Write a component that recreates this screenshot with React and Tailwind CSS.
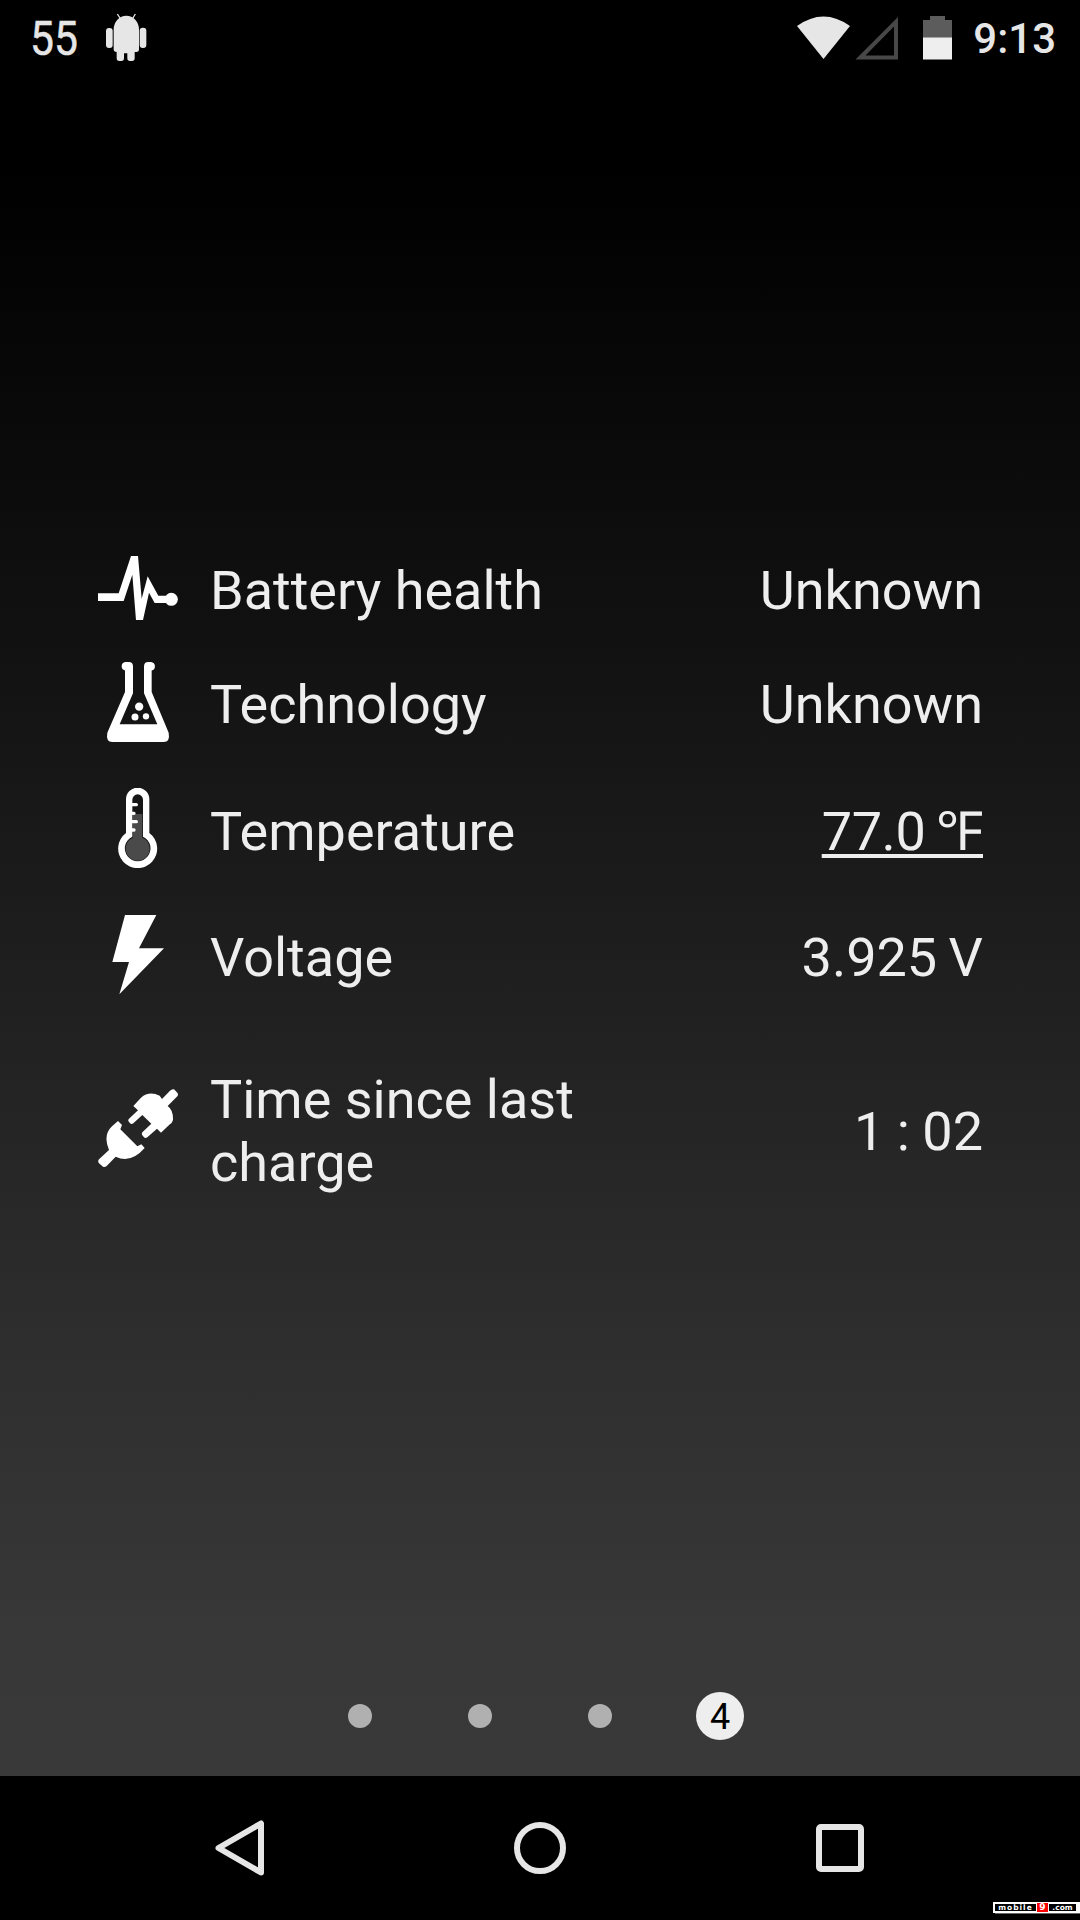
import React from "react";

const PulseIcon = () => (
  <svg viewBox="54 24 240 240" className="w-20 h-20" fill="#fff">
    <path d="M54 160H116L153 48H174L185 176L203 109L235 167H258V189H224L207 158L189 240H168L157 104L131 183H54Z" />
    <circle cx="274" cy="178" r="19.5" />
  </svg>
);

const FlaskIcon = () => (
  <svg viewBox="54 366 240 240" className="w-20 h-20" fill="#fff">
    <path d="M136 366h10q13 0 13 13V460L119 553H232L192 460V379q0-13 13-13h8a13 13 0 0 1 2 25.500V456L266 578q5 28-15 28H97q-20 0-15-28L135 456V391.500a13 13 0 0 1 1-25.500Z" />
    <circle cx="177.500" cy="500" r="12.500" />
    <circle cx="165" cy="531" r="10.500" />
    <circle cx="198" cy="529" r="9.500" />
  </svg>
);

const ThermometerIcon = () => (
  <svg viewBox="54 53 240 240" className="w-20 h-20" fill="#fff">
    <path d="M138 87a35 35 0 0 1 70 0V188a58.500 58.500 0 1 1-70 0Z" />
    <path
      d="M157 88a16 16 0 0 1 32 0V199a38.500 38.500 0 1 1-32 0Z"
      fill="#161616"
    />
    <path d="M159 131H187V202a36 36 0 1 1-28 0Z" fill="#4a4a4a" />
    <path
      d="M155 103H169M155 129H162M155 154H169M155 179H162"
      stroke="#fff"
      strokeWidth="10"
      strokeLinecap="round"
    />
  </svg>
);

const BoltIcon = () => (
  <svg viewBox="54 435 240 240" className="w-20 h-20" fill="#fff">
    <path d="M135 435H229L177 535H252L118 673L147 576H97Z" />
  </svg>
);

const PlugIcon = () => (
  <svg viewBox="54 84 240 240" className="w-20 h-20" fill="#fff">
    <path d="M160 138L183 113Q207 92 239 107L246 117L270 92q6-6 12-4l10 10q4 6 0 11L263 138Q280 150 279 180Q277 189 268 194L243 218L231 206L202 232q-6 4-10 0l-5-6q-3-5 0-9L214 191L187 165L160 190q-5 4-10 0l-5-7q-1-4 2-7L174 151Z" />
    <path d="M114 183L126 195L121 208L172 259L184 253L194 264Q152 312 107 290L80 318q-6 5-11 2l-12-10q-5-6 0-12L87 270Q68 225 96 199Z" />
  </svg>
);

const AndroidIcon = () => (
  <svg viewBox="315 40 126 144" className="w-[42px] h-12" fill="#e6e6e6">
    <path d="M341 90a38 42 0 0 1 76 0V149q0 8-8 8H404V176q0 8-8 8h-6q-8 0-8-8V161H372V176q0 8-8 8h-6q-8 0-8-8V157q-9 0-9-8Z" />
    <rect x="318" y="85" width="20" height="60" rx="9" />
    <rect x="419" y="84" width="20" height="61" rx="9" />
    <path d="M352 43L362 58M406 43L397 58" stroke="#e6e6e6" strokeWidth="4" />
  </svg>
);

const ROWS = [
  {
    label: "Battery health",
    value: "Unknown",
    icon: PulseIcon,
    height: "h-[102px]",
    iconShift: "-mt-1",
  },
  {
    label: "Technology",
    value: "Unknown",
    icon: FlaskIcon,
    height: "h-[126px]",
    iconShift: "-mt-1",
  },
  {
    label: "Temperature",
    value: "77.0 ℉",
    icon: ThermometerIcon,
    height: "h-32",
    iconShift: "-mt-1.5",
    valueClass:
      "tracking-[-0.4px] [word-spacing:-2px] underline decoration-[4px] underline-offset-[4px] [text-decoration-skip-ink:none]",
  },
  {
    label: "Voltage",
    value: "3.925 V",
    icon: BoltIcon,
    height: "h-[124px]",
    iconShift: "-mt-1",
    valueClass: "[word-spacing:-2px]",
  },
  {
    label: "Time since last charge",
    value: "1 : 02",
    icon: PlugIcon,
    height: "h-56",
    iconShift: "-mt-1.5",
    valueClass: "[word-spacing:-1px]",
  },
];

function StatusBar() {
  return (
    <header className="h-[75px] flex items-center justify-between pl-[30px] pr-6 text-[#e6e6e6]">
      <div className="flex items-center">
        <span className="w-[75px] pt-0.5 text-[49px] leading-none origin-left scale-x-[0.87] [-webkit-text-stroke:0.5px_#e6e6e6]">
          55
        </span>
        <div className="-mt-0.5">
          <AndroidIcon />
        </div>
      </div>
      <div className="flex items-center">
        <svg viewBox="0 0 156 44" className="w-[156px] h-11">
          <path d="M0 10Q26.500-9 53 10L26.500 43Z" fill="#e6e6e6" />
          <path
            d="M58.500 43.500L101 1V43.500ZM68.500 39.500H97V10.500Z"
            fill="#484848"
            fillRule="evenodd"
          />
          <path d="M133 0h15v4h7v18h-29V4h7Z" fill="#5c5c5c" />
          <path d="M126 21.500h29V43.500h-29Z" fill="#eee" />
        </svg>
        <span className="ml-5 pt-[3px] text-[42px] leading-none font-medium">
          9:13
        </span>
      </div>
    </header>
  );
}

function InfoRow({ row }) {
  const Icon = row.icon;
  return (
    <div className={`flex items-center ${row.height}`}>
      <div className={row.iconShift}>
        <Icon />
      </div>
      <div className="ml-8 w-[400px] shrink-0">{row.label}</div>
      <div className="flex-1 text-right whitespace-nowrap">
        <span className={row.valueClass}>{row.value}</span>
      </div>
    </div>
  );
}

function Pager() {
  return (
    <div className="h-12 mb-9 flex justify-center">
      {[1, 2, 3, 4].map((n) => (
        <div key={n} className="w-[120px] flex items-center justify-center">
          {n === 4 ? (
            <span className="w-12 h-12 pt-0.5 rounded-full bg-[#eee] text-black text-[36px] leading-none flex items-center justify-center">
              4
            </span>
          ) : (
            <span className="w-6 h-6 rounded-full bg-[#b0b0b0]" />
          )}
        </div>
      ))}
    </div>
  );
}

function Watermark() {
  return (
    <div className="absolute right-0 bottom-[7px] w-[87px] h-[11px] pl-0.5 bg-white flex items-center gap-px font-['DejaVu_Sans'] font-bold text-[7.5px] text-white shadow-[2px_1px_0_#666]">
      <span className="w-[41px] h-[7px] bg-black flex items-center justify-center leading-none tracking-[1px]">
        mobile
      </span>
      <span className="w-[11px] h-[9px] bg-[#f00] flex items-center justify-center text-[9px] leading-none">
        9
      </span>
      <span className="w-[27px] h-[7px] bg-black flex items-center justify-center leading-none">
        .com
      </span>
    </div>
  );
}

function NavBar() {
  return (
    <nav className="relative h-36 bg-black flex items-center justify-center">
      <div className="w-[300px] flex justify-center">
        <svg viewBox="0 0 60 60" className="w-[60px] h-[60px]" fill="none">
          <path
            d="M8.500 30L51 5.500V54.500Z"
            stroke="#e6e6e6"
            strokeWidth="6"
            strokeLinejoin="round"
          />
        </svg>
      </div>
      <div className="w-[300px] flex justify-center">
        <span className="w-[52px] h-[52px] rounded-full border-[6px] border-[#e6e6e6]" />
      </div>
      <div className="w-[300px] flex justify-center">
        <span className="w-12 h-12 rounded-[5px] border-[6px] border-[#e6e6e6]" />
      </div>
      <Watermark />
    </nav>
  );
}

export default function App() {
  return (
    <div className="w-[1080px] h-[1920px] overflow-hidden flex flex-col bg-black font-[Roboto,sans-serif]">
      <div className="flex-1 flex flex-col bg-[linear-gradient(#000_170px,#131313_680px,#2f2f2f_1376px,#383838_1640px,#393939_1776px)]">
        <StatusBar />
        <main className="flex-1 pt-[464px] pl-[98px] pr-[97px] text-[54px] leading-[63px] text-[#eee]">
          {ROWS.map((row) => (
            <InfoRow key={row.label} row={row} />
          ))}
        </main>
        <Pager />
      </div>
      <NavBar />
    </div>
  );
}
